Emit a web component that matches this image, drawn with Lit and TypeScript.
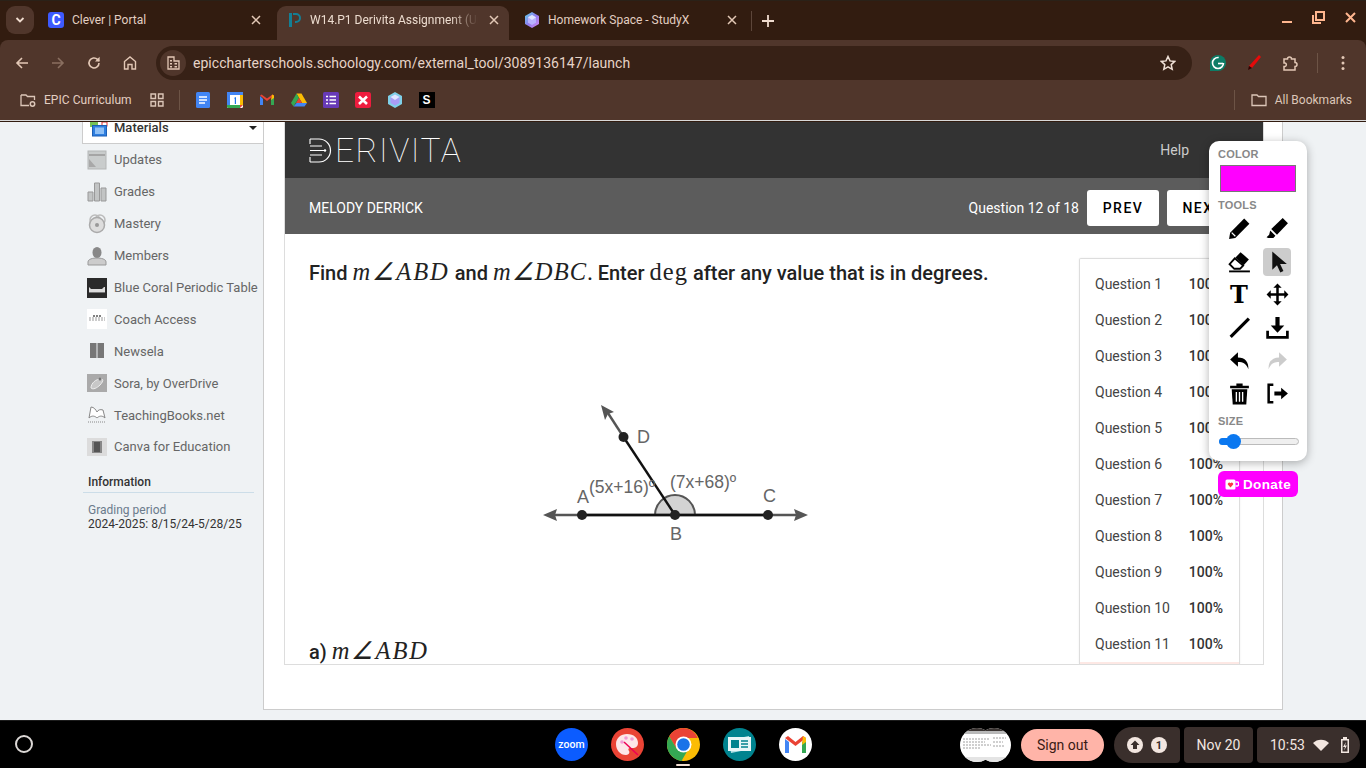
import { LitElement, html, css } from "lit";
import { customElement } from "lit/decorators.js";

const closeX = html`<svg class="x" viewBox="0 0 12 12"><path d="M2 2l8 8M10 2l-8 8" stroke="#e3c8b6" stroke-width="1.5" fill="none"/></svg>`;
const cube = html`<svg class="fav" viewBox="0 0 16 16"><defs><linearGradient id="cb" x1="0" y1="0" x2="1" y2="1"><stop offset="0" stop-color="#5fd6e8"/><stop offset=".5" stop-color="#8f7bf0"/><stop offset="1" stop-color="#d88cf0"/></linearGradient></defs><path d="M8 0l7 4v8l-7 4-7-4V4z" fill="url(#cb)"/><path d="M8 3l4 2.3v5.4L8 13l-4-2.3V5.3z" fill="#b9b2ff"/><path d="M8 3l4 2.3L8 8 4 5.3z" fill="#dfe6ff"/></svg>`;

const navIcons = {
  back: html`<svg class="nav" viewBox="0 0 16 16"><path d="M14 8H3M8 3L3 8l5 5" stroke="#e3c8b6" stroke-width="1.6" fill="none"/></svg>`,
  fwd: html`<svg class="nav" viewBox="0 0 16 16"><path d="M2 8h11M8 3l5 5-5 5" stroke="#8a6f60" stroke-width="1.6" fill="none"/></svg>`,
  reload: html`<svg class="nav" viewBox="0 0 16 16"><path d="M13 8a5 5 0 1 1-1.5-3.6L13 6" stroke="#e3c8b6" stroke-width="1.6" fill="none"/><path d="M13.6 1.8v4.6H9z" fill="#e3c8b6"/></svg>`,
  home: html`<svg class="nav" viewBox="0 0 16 16"><path d="M2.5 14V6.5L8 2l5.500 4.500V14H10V9.500H6V14z" stroke="#e3c8b6" stroke-width="1.400" fill="none"/></svg>`,
};

const bookmarks = [
  html`<svg class="bm" viewBox="0 0 16 16"><rect x="1" width="14" height="16" rx="1.500" fill="#4285f4"/><path d="M4 5h8M4 8h8M4 11h6" stroke="#fff" stroke-width="1.500"/></svg>`,
  html`<svg class="bm" viewBox="0 0 16 16"><rect width="16" height="16" rx="1.500" fill="#fff"/><path d="M0 0h16v3H0z" fill="#4285f4"/><path d="M0 0h3v13H0z" fill="#4285f4"/><path d="M0 13h13v3H1.500A1.500 1.500 0 0 1 0 14.500z" fill="#34a853"/><path d="M13 3h3v10h-3z" fill="#fbbc04"/><path d="M13 13h3l-3 3z" fill="#ea4335"/><path d="M7 6l2-1v7H7.800V6.800z" fill="#1a73e8"/></svg>`,
  html`<svg class="bm" viewBox="0 0 16 16"><path d="M1 4v9h3V7z" fill="#4285f4"/><path d="M12 7v6h3V4z" fill="#34a853"/><path d="M1 3.500L8 9l7-5.500-1.500-1L8 6.500 2.500 2.500z" fill="#ea4335"/><path d="M13 2.500l2 1V6l-3 2z" fill="#fbbc04"/></svg>`,
  html`<svg class="bm" viewBox="0 0 16 16"><path d="M5.500 1.500h5L16 11h-5z" fill="#fbbc04"/><path d="M5.500 1.500L0 11l2.500 3.500L8 6z" fill="#34a853"/><path d="M2.500 14.500h11L16 11H5.500z" fill="#4285f4"/><path d="M8 6l3 5H5z" fill="#ea4335"/></svg>`,
  html`<svg class="bm" viewBox="0 0 16 16"><rect width="16" height="16" rx="1.500" fill="#673ab7"/><path d="M6.500 4.500H13M6.500 8H13M6.500 11.500H13M3 4.500h2M3 8h2M3 11.500h2" stroke="#fff" stroke-width="1.400"/></svg>`,
  html`<svg class="bm" viewBox="0 0 16 16"><rect width="16" height="16" rx="2.500" fill="#ee1c3e"/><path d="M4 4.500l8 7.500M12 4.500L4 12" stroke="#fff" stroke-width="2.600"/></svg>`,
  html`<svg class="bm" viewBox="0 0 16 16"><path d="M8 0l7 4v8l-7 4-7-4V4z" fill="#7fd0e8"/><path d="M8 2.500l4.500 2.500v6L8 13.500 3.500 11V5z" fill="#a99cf5"/><path d="M8 2.500L12.500 5 8 8 3.500 5z" fill="#dfe6ff"/></svg>`,
];

const sideIcons = [
  html`<svg class="si" viewBox="0 0 20 20"><rect x="1" y="1" width="18" height="18" fill="#c9cccc" stroke="#b4b6b6"/><path d="M2 5h16" stroke="#999" stroke-width="1.500"/><path d="M2 9l7 8H2z" fill="#a8a8a8"/></svg>`,
  html`<svg class="si" viewBox="0 0 20 20"><path d="M1 10h5v9H1zM7.500 1h5v18h-5zM14 6h5v13h-5z" fill="#c2c4c4" stroke="#999"/></svg>`,
  html`<svg class="si" viewBox="0 0 20 20"><circle cx="8" cy="6" r="5" fill="none" stroke="#bbb" stroke-width="1.500"/><circle cx="13" cy="6" r="5" fill="none" stroke="#bbb" stroke-width="1.500"/><circle cx="10" cy="11" r="7.500" fill="#ddd" stroke="#aaa" stroke-width="1.500"/><circle cx="10" cy="11" r="2" fill="#999"/></svg>`,
  html`<svg class="si" viewBox="0 0 20 20"><ellipse cx="10" cy="6.500" rx="4.500" ry="5.500" fill="#888"/><path d="M1 19v-3c0-3 5-4 9-4s9 1 9 4v3z" fill="#ccc" stroke="#999"/></svg>`,
  html`<svg class="si" viewBox="0 0 20 20"><rect width="20" height="20" fill="#2a2a2a"/><path d="M2 9l2 2h11l2-2h1v5H2z" fill="#ddd"/><path d="M2 14h16v1H2z" fill="#777"/></svg>`,
  html`<svg class="si" viewBox="0 0 20 20"><rect width="20" height="20" fill="#fff"/><path d="M2 11h16M2 9h16" stroke="#999" stroke-width="1" stroke-dasharray="2 1"/><path d="M6 7h8" stroke="#555" stroke-width="1.500" stroke-dasharray="2 1"/></svg>`,
  html`<svg class="si" viewBox="0 0 20 20"><path d="M3 2h6.500v15H3zM10.500 2H17v15h-6.500z" fill="#777"/></svg>`,
  html`<svg class="si" viewBox="0 0 20 20"><rect width="20" height="18" y="1" fill="#aaa"/><path d="M4 15c0-5 5-9 10-9 3 0 2 3-1 6s-7 5-9 3z" fill="#c8c8c8" stroke="#eee"/><circle cx="13" cy="6" r="1.500" fill="#777"/></svg>`,
  html`<svg class="si" viewBox="0 0 20 20"><path d="M2 13c3-3 6-2 8 0 2-2 5-3 8 0l-2-8c-3-1-5 0-6 2-1-2-3-5-6-5z" fill="#fff" stroke="#888"/><path d="M1 17h18" stroke="#888" stroke-dasharray="1 1"/></svg>`,
  html`<svg class="si" viewBox="0 0 20 20"><rect width="20" height="18" y="1" fill="#dcdcdc"/><rect x="5" y="4" width="10" height="12" fill="#888"/><rect x="7" y="5" width="6" height="10" fill="#555"/></svg>`,
];
const sideItems = ["Updates", "Grades", "Mastery", "Members", "Blue Coral Periodic Table", "Coach Access", "Newsela", "Sora, by OverDrive", "TeachingBooks.net", "Canva for Education"];

const tools = [
  html`<svg viewBox="0 0 24 24"><path d="M16.500 2.500l5 5L8 21l-6 1 1-6z" fill="#000"/><path d="M4.500 16l3.500 3.500" stroke="#fff" stroke-width="1.200"/></svg>`,
  html`<svg viewBox="0 0 24 24"><path d="M17 2l5 5-10.500 11L6 12.500z" fill="#000"/><path d="M5 14l5 5-2 2H3l-1.500-.500L4 18z" fill="#000"/></svg>`,
  html`<svg viewBox="0 0 24 24"><path d="M13 3l8 7-5 5.500-8-7z" fill="#000"/><path d="M7.500 9l8 7-3 3H7l-4.500-4.500z" fill="#fff" stroke="#000" stroke-width="1.800"/><path d="M2 21.500h20" stroke="#000" stroke-width="1.800"/></svg>`,
  html`<svg viewBox="0 0 24 24"><path d="M7 2.500v17.500l4.500-4.300 3.200 6.800 3-1.400-3.200-6.600H21z" fill="#111"/></svg>`,
  html`<span class="tee">T</span>`,
  html`<svg viewBox="0 0 24 24"><path d="M12 1.500l4 4h-2.800v5.300h5.300V8l4 4-4 4v-2.800h-5.300v5.300H16l-4 4-4-4h2.800v-5.300H5.500V16l-4-4 4-4v2.800h5.300V5.500H8z" fill="#000"/></svg>`,
  html`<svg viewBox="0 0 24 24"><path d="M3.500 21L21 3.500" stroke="#000" stroke-width="3"/></svg>`,
  html`<svg viewBox="0 0 24 24"><path d="M10 2h4v8h4.500L12 17l-6.500-7H10z" fill="#000"/><path d="M2.500 15v6.500h19V15" stroke="#000" stroke-width="2.600" fill="none"/></svg>`,
  html`<svg viewBox="0 0 24 24"><path d="M10.500 4L3 11l7.500 7v-4.500c5 0 8 1.500 10 7 .5-7-3-11.500-10-11.500z" fill="#000"/></svg>`,
  html`<svg viewBox="0 0 24 24"><path d="M13.500 4L21 11l-7.500 7v-4.500c-5 0-8 1.500-10 7-.5-7 3-11.500 10-11.500z" fill="#ccc"/></svg>`,
  html`<svg viewBox="0 0 24 24"><path d="M3 4.500h18v2.500H3zM9 2.500h6v2H9z" fill="#000"/><path d="M4.500 8h15l-1 14.500h-13z" fill="#000"/><path d="M9 10.500v9.500M12 10.500v9.500M15 10.500v9.500" stroke="#fff" stroke-width="1.300"/></svg>`,
  html`<svg viewBox="0 0 24 24"><path d="M8 3.500H3.500v17H8" stroke="#000" stroke-width="2.400" fill="none"/><path d="M9 10h6.500V6.500L22 12l-6.500 5.500V14H9z" fill="#000"/></svg>`,
];

@customElement("app-root")
export class AppRoot extends LitElement {
  static styles = css`
    :host { display: block; width: 1366px; height: 768px; overflow: hidden; position: relative; font-family: Roboto, sans-serif; }
    * { box-sizing: border-box; }
    .chrome { height: 122px; background: #321c10; border-top: 1px solid #2a2118; }
    .strip { height: 39px; display: flex; align-items: flex-start; padding: 5px 0 0 6px; position: relative; }
    .tabmenu { width: 28px; height: 28px; border-radius: 9px; background: #50362b; display: flex; align-items: center; justify-content: center; margin-right: 6px; }
    .tab { width: 238px; height: 34px; display: flex; align-items: center; padding: 0 16px 6px 8px; gap: 8px; position: relative; font-size: 12px; color: #e3cfc2; }
    .tab.active { color: #ecdccf; padding-left: 9px; gap: 7px; }
    .tab.active::before { content: ""; position: absolute; left: -1px; right: 7px; top: 0; bottom: 0; background: #50362b; border-radius: 9px 9px 0 0; z-index: 0; }
    .tab > * { position: relative; }
    .fav { width: 16px; height: 16px; flex: none; }
    .title { flex: 1; min-width: 0; white-space: nowrap; overflow: hidden; }
    .active .title { -webkit-mask-image: linear-gradient(90deg, #000 140px, transparent 168px); mask-image: linear-gradient(90deg, #000 140px, transparent 168px); }
    .x { width: 12px; height: 12px; flex: none; }
    .cl { width: 16px; height: 16px; border-radius: 3px; background: #3d5afe; color: #fff; font: 700 14px/16px Roboto, sans-serif; text-align: center; flex: none; }
    .strip-sep { width: 1px; height: 20px; background: #5d463a; margin: 5px 0 0 -3px; }
    .plus { width: 14px; height: 14px; margin: 8px 0 0 9px; }
    .winctl { margin-left: auto; display: flex; gap: 19px; padding: 5px 9px 0 0; }
    .winctl svg { width: 13px; height: 13px; }
    .toolbar { height: 40px; background: #50362b; border-radius: 8px 8px 0 0; display: flex; align-items: flex-end; }
    .navs { display: flex; width: 156px; padding-left: 14px; gap: 20px; align-self: center; padding-top: 6px; }
    .nav { width: 16px; height: 16px; }
    .omni { width: 1036px; height: 34px; background: #372116; border-radius: 17px; display: flex; align-items: center; padding: 0 16px 0 4px; }
    .chip { width: 26px; height: 26px; border-radius: 50%; background: #50362b; display: flex; align-items: center; justify-content: center; margin-right: 7px; }
    .chip svg { width: 14px; height: 14px; }
    .url { flex: 1; font-size: 14px; color: #e6d3c7; letter-spacing: 0.03px; }
    .star { width: 16px; height: 16px; }
    .ext { display: flex; align-items: center; align-self: center; padding: 6px 0 0 17px; }
    .ext svg { width: 18px; height: 18px; margin-right: 18px; flex: none; }
    .vsep { width: 1px; height: 20px; background: #6d5446; flex: none; }
    .ext .vsep { margin: 0 18px 0 0; }
    .ext .dots { width: 14px; margin: 0; }
    .bmbar { height: 41px; background: #50362b; display: flex; align-items: center; padding-left: 20px; font-size: 12px; color: #e3cfc2; border-bottom: 1px solid #d8d8d8; }
    .bmbar .folder { width: 16px; height: 16px; margin-right: 8px; flex: none; }
    .bmbar .epic { letter-spacing: .05px; }
    .gridi { width: 16px; height: 16px; margin: 0 14px 0 17px; }
    .bmbar .vsep { margin-right: 15px; }
    .bm { width: 16px; height: 16px; margin-right: 16px; flex: none; }
    .bm-s { width: 16px; height: 16px; background: #000; color: #fff; font: 700 12px/16px "Liberation Sans", sans-serif; text-align: center; }
    .all { margin-left: auto; display: flex; align-items: center; padding-right: 14px; color: #dcc6b8; }
    .all .vsep { margin-right: 16px; }
    .page { height: 598px; background: #eff2f4; display: flex; padding-left: 82px; align-items: flex-start; }
    .side { width: 182px; flex: none; }
    .mat { height: 22px; background: #fff; border-left: 1px solid #ccc; border-bottom: 1px solid #ccc; display: flex; align-items: center; padding: 0 7px 11px 6px; font-size: 13px; font-weight: 500; color: #333; gap: 5px; }
    .mat svg.mi { width: 20px; height: 15px; margin-top: 4px; flex: none; }
    .mat span { flex: 1; }
    .caret { width: 0; height: 0; border: 4px solid transparent; border-top: 4px solid #222; margin-top: 5px; }
    .items { padding: 0 0 0 5px; }
    .item { height: 31.900px; display: flex; align-items: center; gap: 7px; font-size: 13px; color: #666; white-space: nowrap; }
    .si { width: 20px; height: 20px; flex: none; }
    .info { padding: 4px 10px 0 1px; font-size: 12px; line-height: 14px; }
    .info h4 { margin: 0; padding: 8px 0 3px 5px; font-size: 12px; line-height: 14px; font-weight: 500; color: #333; border-bottom: 1px solid #ccdde8; }
    .gp { padding: 10px 0 0 5px; color: #6b7b8c; }
    .dates { padding-left: 5px; color: #333; }
    .main { width: 1020px; height: 588px; flex: none; margin-left: -1px; background: #fff; border: 1px solid #ccc; border-top: 0; padding-left: 20px; }
    .frame { width: 980px; height: 543px; background: #fff; border: 1px solid #ddd; border-top: 0; overflow: hidden; }
    .dh { height: 56px; background: #333; display: flex; align-items: center; padding: 0 74px 0 24px; }
    .logo { display: flex; align-items: center; gap: 3px; padding-top: 1px; color: #fff; font: 100 33.500px/40px Roboto, sans-serif; letter-spacing: 1.500px; }
    .logo svg { width: 23px; height: 25px; flex: none; }
    .help { margin-left: auto; color: #ccc; font-size: 14px; }
    .ds { height: 56px; background: #5c5c5c; display: flex; align-items: center; padding: 4px 24px 0; color: #fff; font-size: 14px; }
    .ds .qn { margin-left: auto; margin-right: 8px; }
    .btn { width: 72px; height: 36px; background: #fff; border-radius: 3px; color: #000; font-weight: 500; letter-spacing: 1.500px; display: flex; align-items: center; justify-content: center; margin-left: 0; }
    .btn + .btn { margin-left: 8px; }
    .body { display: flex; height: 430px; }
    .left { flex: 1; padding: 23px 0 0 24px; min-width: 0; }
    .q { font-size: 20px; line-height: 30px; font-weight: 500; color: #222; white-space: nowrap; }
    .m { font: italic 400 24.500px/30px "Liberation Serif", serif; letter-spacing: 2px; color: #222; }
    .m.tight { letter-spacing: 1.100px; }
    .rm { font: 400 24.500px/30px "Liberation Serif", serif; letter-spacing: 1px; color: #222; }
    .diagram { display: block; width: 290px; height: 155px; margin: 107px 0 0 221px; }
    .a { margin-top: 86px; }
    .list { width: 161px; flex: none; margin: 24px 23px 0 0; background: #fff; border: 1px solid #ddd; border-bottom: 0; border-radius: 2px 2px 0 0; padding-top: 7px; box-shadow: 0 0 2px rgba(0,0,0,.08); }
    .row { height: 36px; display: flex; align-items: center; padding-left: 15px; font-size: 14px; color: #444; }
    .row b { margin-left: auto; margin-right: 16px; font-weight: 500; color: #333; }
    .row.cur { background: #fde8e4; }
    .panel { position: absolute; left: 1209px; top: 141px; width: 98px; height: 320px; background: #fff; border-radius: 10px; box-shadow: 0 2px 10px rgba(0,0,0,.3); padding: 7px 9px; font-family: "Liberation Sans", sans-serif; }
    .lab { font-size: 11px; font-weight: 700; color: #888; line-height: 13px; letter-spacing: .2px; }
    .sw { width: 76px; height: 27px; margin: 4px 0 7px 2px; background: #f0f; border: 1px solid #777; }
    .tools { display: grid; grid-template-columns: 28px 28px; grid-auto-rows: 33px; column-gap: 10px; margin: 0 0 0 7px; justify-items: center; align-items: center; }
    .tool { width: 28px; height: 28px; display: flex; align-items: center; justify-content: center; border-radius: 4px; }
    .tool.sel { background: #ccc; }
    .tool svg { width: 25px; height: 25px; }
    .tee { font: 700 24px/28px "DejaVu Serif", serif; color: #000; }
    .sz { margin-top: 5px; }
    .slider { position: relative; height: 7px; width: 80px; margin: 10px 0 0 1px; border: 1px solid #bbb; background: #efefef; border-radius: 4px; }
    .fill { position: absolute; left: -1px; top: -1px; height: 7px; width: 12px; background: #0b78f0; border-radius: 4px 0 0 4px; }
    .thumb { position: absolute; left: 6px; top: -5px; width: 15px; height: 15px; border-radius: 50%; background: #0b78f0; }
    .donate { position: absolute; left: 1218px; top: 471px; width: 80px; height: 26px; padding-top: 1px; background: #f0f; border-radius: 6px; color: #fff; font: 700 13.500px/25px "Liberation Sans", sans-serif; display: flex; align-items: center; justify-content: center; gap: 4px; letter-spacing: .4px; }
    .donate svg { width: 14px; height: 11px; }
    .shelf { height: 48px; background: #000; border-top: 1px solid #1c1c1c; display: grid; grid-template-columns: 1fr auto 1fr; align-items: center; }
    .launcher { width: 18px; height: 18px; margin: -1px 0 0 15px; border-radius: 50%; border: 2.500px solid #dcd8d6; }
    .apps { display: flex; gap: 23px; position: relative; }
    .apps svg { width: 33px; height: 33px; display: block; }
    .ind { position: absolute; left: 50%; margin-left: -7px; bottom: -5px; width: 14px; height: 2px; background: #f3dfd3; border-radius: 1px; }
    .tray { display: flex; justify-content: flex-end; align-items: center; padding-right: 6px; gap: 4px; color: #f2e6e0; font-size: 14px; }
    .thumbn { width: 51px; height: 36px; margin-right: 6px; }
    .signout { width: 83px; height: 32px; border-radius: 16px; background: #ffb4a8; color: #3a1a14; display: flex; align-items: center; justify-content: center; margin-right: 6px; }
    .pill { height: 36px; background: #3a2f2c; display: flex; align-items: center; border-radius: 4px; }
    .p1 { width: 66px; border-radius: 18px 4px 4px 18px; padding-left: 13px; gap: 8px; }
    .p1 svg { width: 16px; height: 16px; }
    .p2 { width: 69px; justify-content: center; }
    .p3 { width: 103px; border-radius: 4px 18px 18px 4px; padding-left: 13px; gap: 8px; }
    .p3 svg { width: 16px; height: 16px; }
  `;

  render() {
    const rows = Array.from({ length: 12 }, (_, i) => i + 1);
    return html`
      <div class="chrome">
        <div class="strip">
          <div class="tabmenu"><svg width="12" height="12" viewBox="0 0 12 12"><path d="M2.500 4l3.500 3.500L9.500 4" stroke="#f0dccf" stroke-width="1.800" fill="none"/></svg></div>
          <div class="tab"><div class="cl">C</div><div class="title">Clever | Portal</div>${closeX}</div>
          <div class="tab active">
            <svg class="fav" viewBox="0 0 16 16"><path d="M2 1h3v14H2zM6 1h3a5 5 0 0 1 0 10H8V9h1a3 3 0 0 0 0-6H6z" fill="#147f95"/></svg>
            <div class="title">W14.P1 Derivita Assignment (Unit 4)</div>${closeX}
          </div>
          <div class="tab">${cube}<div class="title">Homework Space - StudyX</div>${closeX}</div>
          <div class="strip-sep"></div>
          <svg class="plus" viewBox="0 0 14 14"><path d="M7 1v12M1 7h12" stroke="#f0dccf" stroke-width="1.800"/></svg>
          <div class="winctl">
            <svg viewBox="0 0 13 13"><path d="M2 11h10" stroke="#ffb68f" stroke-width="2"/></svg>
            <svg viewBox="0 0 13 13"><path d="M4 1h8v8H4z" fill="none" stroke="#ffb68f" stroke-width="2"/><path d="M1 4v8h8" fill="none" stroke="#ffb68f" stroke-width="2"/></svg>
            <svg viewBox="0 0 13 13"><path d="M2 2l9 9M11 2l-9 9" stroke="#ffb68f" stroke-width="2"/></svg>
          </div>
        </div>
        <div class="toolbar">
          <div class="navs">${navIcons.back}${navIcons.fwd}${navIcons.reload}${navIcons.home}</div>
          <div class="omni">
            <div class="chip"><svg viewBox="0 0 14 14"><path d="M2 13V1h6v4h5v8z" fill="none" stroke="#e3c8b6" stroke-width="1.300"/><path d="M4 4h2v1.500H4zM4 7h2v1.500H4zM4 10h2v1.500H4zM8.500 7H11v1.500H8.500zM8.500 10H11v1.500H8.500z" fill="#e3c8b6"/></svg></div>
            <div class="url">epiccharterschools.schoology.com/external_tool/3089136147/launch</div>
            <svg class="star" viewBox="0 0 16 16"><path d="M8 1.500l2 4.400 4.800.5-3.600 3.200 1 4.700L8 11.900l-4.200 2.400 1-4.700L1.200 6.400 6 5.900z" fill="none" stroke="#efe0d6" stroke-width="1.500"/></svg>
          </div>
          <div class="ext">
            <svg viewBox="0 0 18 18"><path d="M9 1a8 8 0 1 1 0 16H1v-8a8 8 0 0 1 8-8z" fill="#0d7c66"/><circle cx="9" cy="9" r="5.500" fill="none" stroke="#fff" stroke-width="1.600" stroke-dasharray="26 8"/><path d="M9 9.500h5" stroke="#fff" stroke-width="1.600"/></svg>
            <svg viewBox="0 0 18 18"><path d="M14 1l2 2-9 11-3-2z" fill="#e60a0a"/><path d="M4 12l3 2-4 2z" fill="#300"/></svg>
            <svg viewBox="0 0 18 18"><path d="M3 5h3.500a2 2 0 0 1 4 0H14v3.500a2 2 0 0 1 0 4V16H3v-3.500h1a1.800 1.800 0 0 0 0-3.500H3z" fill="none" stroke="#e3c8b6" stroke-width="1.500"/></svg>
            <div class="vsep"></div>
            <svg class="dots" viewBox="0 0 14 18"><circle cx="7" cy="3.500" r="1.500" fill="#e3c8b6"/><circle cx="7" cy="9" r="1.500" fill="#e3c8b6"/><circle cx="7" cy="14.500" r="1.500" fill="#e3c8b6"/></svg>
          </div>
        </div>
        <div class="bmbar">
          <svg class="folder" viewBox="0 0 16 16"><path d="M1 3h5l1.500 1.500H14.500V8M9 13.500H1V3" fill="none" stroke="#dcc6b8" stroke-width="1.300"/><circle cx="12.500" cy="12" r="2.200" fill="none" stroke="#dcc6b8" stroke-width="1.500"/></svg>
          <span class="epic">EPIC Curriculum</span>
          <svg class="gridi" viewBox="0 0 16 16"><path d="M2 2h4.500v4.500H2zM9.500 2H14v4.500H9.500zM2 9.500h4.500V14H2zM9.500 9.500H14V14H9.500z" fill="none" stroke="#dcc6b8" stroke-width="1.400"/></svg>
          <div class="vsep"></div>
          ${bookmarks}
          <div class="bm-s">S</div>
          <div class="all">
            <div class="vsep"></div>
            <svg class="folder" viewBox="0 0 16 16"><path d="M1 3h5l1.500 1.500h7.500V13.500H1z" fill="none" stroke="#dcc6b8" stroke-width="1.300"/></svg>
            <span>All Bookmarks</span>
          </div>
        </div>
      </div>

      <div class="page">
        <div class="side">
          <div class="mat">
            <svg class="mi" viewBox="0 5 20 15"><rect x="1" y="5" width="8" height="5" fill="#79c257"/><rect x="13" y="5" width="5" height="4" fill="#fff" stroke="#d33"/><rect x="3.500" y="8.500" width="14" height="10.500" fill="#2f7fe0" stroke="#1b5fb5"/><rect x="6" y="10.500" width="9" height="6.500" fill="#8fc0f5"/></svg>
            <span>Materials</span><div class="caret"></div>
          </div>
          <div class="items">
            ${sideItems.map((t, i) => html`<div class="item">${sideIcons[i]}<span>${t}</span></div>`)}
          </div>
          <div class="info">
            <h4>Information</h4>
            <div class="gp">Grading period</div>
            <div class="dates">2024-2025: 8/15/24-5/28/25</div>
          </div>
        </div>
        <div class="main">
          <div class="frame">
            <div class="dh">
              <div class="logo">
                <svg viewBox="0 0 23 25"><path d="M1 1h9a11.500 11.500 0 0 1 0 23H1" fill="none" stroke="#fff" stroke-width="1.200"/><path d="M1 1v5M1 19v5M1 8h12M1 12.500h15M1 17h12" stroke="#fff" stroke-width="1.100"/><circle cx="16" cy="12.500" r="1.200" fill="#fff"/></svg>
                <span>ERIVITA</span>
              </div>
              <div class="help">Help</div>
            </div>
            <div class="ds">
              <span>MELODY DERRICK</span>
              <span class="qn">Question 12 of 18</span>
              <div class="btn">PREV</div>
              <div class="btn">NEXT</div>
            </div>
            <div class="body">
              <div class="left">
                <div class="q">Find <span class="m">m∠ABD</span> and <span class="m tight">m∠DBC</span>. Enter <span class="rm">deg</span> after any value that is in degrees.</div>
                <svg class="diagram" viewBox="0 0 290 155">
                  <path d="M125 120a20 20 0 0 1 40 0z" fill="#d3d3d3" stroke="#555" stroke-width="2"/>
                  <path d="M22 120h250" stroke="#555" stroke-width="2.400"/>
                  <path d="M13 120l14-6-2 6 2 6zM278 120l-14-6 2 6-2 6z" fill="#555"/>
                  <path d="M93.500 42L76 15" stroke="#555" stroke-width="2.400"/>
                  <path d="M71 10L84 17 78 19 75 25z" fill="#555"/>
                  <path d="M52 120h186" stroke="#111" stroke-width="2.400"/>
                  <path d="M93.500 42L145 120" stroke="#111" stroke-width="2.400"/>
                  <circle cx="52" cy="120" r="5" fill="#222"/><circle cx="145" cy="120" r="5" fill="#222"/><circle cx="238" cy="120" r="5" fill="#222"/><circle cx="93.500" cy="42" r="5" fill="#222"/>
                  <g font-family="Liberation Sans, sans-serif" font-size="18" fill="#666">
                    <text x="107" y="48">D</text><text x="47" y="108">A</text><text x="140" y="145">B</text><text x="233" y="107">C</text>
                    <text x="59" y="98" font-size="17.500">(5x+16)º</text><text x="140" y="93" font-size="17.500">(7x+68)º</text>
                  </g>
                </svg>
                <div class="q a">a) <span class="m">m∠ABD</span></div>
              </div>
              <div class="list">
                ${rows.map((n) => html`<div class="row ${n === 12 ? "cur" : ""}"><span>Question ${n}</span>${n < 12 ? html`<b>100%</b>` : ""}</div>`)}
              </div>
            </div>
          </div>
        </div>
      </div>

      <div class="panel">
        <div class="lab">COLOR</div>
        <div class="sw"></div>
        <div class="lab">TOOLS</div>
        <div class="tools">${tools.map((t, i) => html`<div class="tool ${i === 3 ? "sel" : ""}">${t}</div>`)}</div>
        <div class="lab sz">SIZE</div>
        <div class="slider"><div class="fill"></div><div class="thumb"></div></div>
      </div>
      <div class="donate"><svg viewBox="0 0 14 11"><rect x="0.500" y="0.500" width="10" height="10" rx="1.500" fill="#fff"/><path d="M10.500 3h2a1 1 0 0 1 1 1v2a1 1 0 0 1-1 1h-2" fill="none" stroke="#fff" stroke-width="1.300"/><path d="M5.500 8.500L2.800 5.500a1.500 1.500 0 0 1 2.700-1.200 1.500 1.500 0 0 1 2.700 1.200z" fill="#f34"/></svg><span>Donate</span></div>

      <div class="shelf">
        <div><div class="launcher"></div></div>
        <div class="apps">
          <svg viewBox="0 0 33 33"><circle cx="16.500" cy="16.500" r="16.500" fill="#0b5cff"/><text x="16.500" y="19.500" text-anchor="middle" font-family="Roboto, sans-serif" font-size="10.500" font-weight="500" fill="#fff">zoom</text></svg>
          <svg viewBox="0 0 33 33"><circle cx="16.500" cy="16.500" r="16.500" fill="#ea4335"/><path d="M16 6c7 0 11 4 11 9 0 4-3 5-5 5h-3c-2 0-2 2-1 3s0 4-3 4C9 27 5 22 5 16S10 6 16 6z" fill="#fde7e9"/><circle cx="11" cy="14" r="1.800" fill="#f29bd4"/><circle cx="15" cy="10" r="1.800" fill="#f29bd4"/><circle cx="21" cy="11" r="1.800" fill="#f29bd4"/><path d="M13 14l14 13" stroke="#e05" stroke-width="1.500"/></svg>
          <svg viewBox="0 0 33 33"><circle cx="16.500" cy="16.500" r="16.500" fill="#fbbc04"/><path d="M16.500 0A16.500 16.500 0 0 0 2.200 8.250L9.400 20.600 16.500 10h14.300A16.500 16.500 0 0 0 16.500 0z" fill="#ea4335"/><path d="M2.200 8.250A16.500 16.500 0 0 0 14.500 32.900l6-10.500-11-1.800z" fill="#34a853"/><circle cx="16.500" cy="16.500" r="8" fill="#fff"/><circle cx="16.500" cy="16.500" r="6.300" fill="#1a73e8"/></svg>
          <svg viewBox="0 0 33 33"><circle cx="16.500" cy="16.500" r="16.500" fill="#00838f"/><path d="M6 12l20-4 2 13-20 4z" fill="#b2dfe5"/><rect x="5" y="9" width="23" height="14" fill="#e8f6f8"/><rect x="8" y="12" width="8" height="8" fill="#00838f"/><path d="M18 13h7M18 16h7M18 19h7" stroke="#00838f" stroke-width="1.300"/></svg>
          <svg viewBox="0 0 33 33"><circle cx="16.500" cy="16.500" r="16.500" fill="#fff"/><path d="M6 11v14h4V14z" fill="#4285f4"/><path d="M23 14v11h4V11z" fill="#34a853"/><path d="M6 10l10.500 8L27 10l-3-2-7.500 6L9 8z" fill="#ea4335"/><path d="M24 8l3 2v4l-4 3z" fill="#fbbc04"/></svg>
          <div class="ind"></div>
        </div>
        <div class="tray">
          <svg class="thumbn" viewBox="0 0 51 36"><defs><clipPath id="tc"><circle cx="17" cy="18" r="17"/><circle cx="34" cy="18" r="17"/></clipPath></defs><g clip-path="url(#tc)"><rect width="51" height="36" fill="#fff"/><rect width="51" height="4" fill="#3a3432"/><rect y="4" width="51" height="3" fill="#b9b9b9"/><path d="M3 12h26M3 15h22M3 18h28M3 21h18M33 11h13M33 15h10M33 19h12" stroke="#888" stroke-width=".8" stroke-dasharray="2 1"/><rect y="30" width="51" height="6" fill="#e4e4e4"/></g></svg>
          <div class="signout">Sign out</div>
          <div class="pill p1">
            <svg viewBox="0 0 16 16"><circle cx="8" cy="8" r="8" fill="#f2e6e0"/><path d="M8 3.500L12.500 8H10v4H6V8H3.500z" fill="#3a2f2c"/></svg>
            <svg viewBox="0 0 16 16"><circle cx="8" cy="8" r="8" fill="#f2e6e0"/><text x="8" y="11.800" text-anchor="middle" font-family="Roboto, sans-serif" font-size="11" font-weight="700" fill="#3a2f2c">1</text></svg>
          </div>
          <div class="pill p2">Nov 20</div>
          <div class="pill p3">
            <span>10:53</span>
            <svg viewBox="0 0 16 16"><path d="M0 6c4-4.500 12-4.500 16 0l-8 8z" fill="#f2e6e0"/></svg>
            <svg viewBox="0 0 16 16"><path d="M6 0h4v2h2v14H4V2h2z" fill="#f2e6e0"/><path d="M5.500 3.500h5v11h-5z" fill="#3a2f2c"/><path d="M9 5L6 10h2l-1 3.500 3-5H8z" fill="#f2e6e0"/></svg>
          </div>
        </div>
      </div>
    `;
  }
}
